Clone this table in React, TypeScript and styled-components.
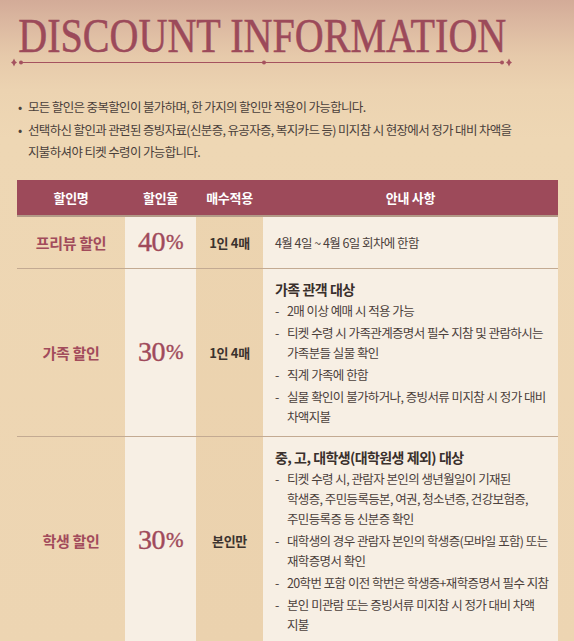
import React from "react";
import styled, { createGlobalStyle } from "styled-components";

const GlobalStyle = createGlobalStyle`
  html, body { margin: 0; padding: 0; }
  body {
    font-family: "Noto Sans CJK KR", "Noto Sans", sans-serif;
    background: #edd5b2;
  }
  * { box-sizing: border-box; }
`;

const COLS = "108px 71px 67px minmax(0, 1fr)";

const Page = styled.div`
  width: 574px;
  min-height: 641px;
  overflow: hidden;
  display: flex;
  flex-direction: column;
  background: linear-gradient(
    180deg,
    #d3ab98 0px,
    #dcb9a1 25px,
    #e6c9aa 55px,
    #ecd3b1 90px,
    #eed7b4 140px,
    #edd5b2 100%
  );
`;

const TitleBlock = styled.header`
  width: 504px;
  margin-left: 10px;
  padding-top: 14px;
  display: flex;
  flex-direction: column;
  align-items: center;
`;

const Title = styled.h1`
  margin: 0;
  font-family: "Liberation Serif", "Times New Roman", serif;
  font-weight: 400;
  font-size: 48px;
  line-height: 44px;
  color: #9c4a5a;
  white-space: nowrap;
  -webkit-text-stroke: 0.5px #9c4a5a;
  transform: scaleX(0.835);
  transform-origin: center;
`;

const Ornament = styled.svg`
  display: block;
  width: 504px;
  height: 9px;
`;

const Notes = styled.ul`
  list-style: none;
  margin: 29px 0 0;
  padding: 0 0 0 18px;
  font-size: 12.5px;
  letter-spacing: -0.65px;
  line-height: 22.5px;
  color: #4a403b;
`;

const Note = styled.li`
  display: flex;
`;

const Bullet = styled.span`
  width: 10px;
  flex: none;
  letter-spacing: 0;
`;

const Lines = styled.span`
  display: flex;
  flex-direction: column;
`;

const Line = styled.span`
  white-space: nowrap;
`;

const Table = styled.div`
  margin: 16px 0 0 17px;
  width: 541px;
  display: flex;
  flex-direction: column;
`;

const HeadRow = styled.div`
  display: grid;
  grid-template-columns: ${COLS};
  height: 37px;
  background: #9d4a5a;
  border-bottom: 2px solid #b29a87;
`;

const HeadCell = styled.div`
  display: flex;
  align-items: center;
  justify-content: center;
  color: #ffffff;
  font-weight: 700;
  font-size: 13px;
  letter-spacing: -0.3px;
`;

const Row = styled.div<{ $min?: number }>`
  display: grid;
  grid-template-columns: ${COLS};
  min-height: ${(p) => (p.$min ? `${p.$min}px` : "auto")};
  border-bottom: 1px solid #c3aa92;
`;

const NameCell = styled.div`
  display: flex;
  align-items: center;
  justify-content: center;
  color: #a24b5b;
  font-weight: 700;
  font-size: 15px;
  letter-spacing: -0.3px;
`;

const RateCell = styled.div`
  display: flex;
  align-items: center;
  justify-content: center;
  background: #f7efe4;
  color: #a04a5b;
  font-family: "Liberation Serif", "Times New Roman", serif;
  font-size: 28px;
  letter-spacing: -0.5px;
  -webkit-text-stroke: 0.4px #a04a5b;
`;

const Pct = styled.span`
  font-size: 21px;
  margin-left: 1px;
`;

const CountCell = styled.div`
  display: flex;
  align-items: center;
  justify-content: center;
  color: #3b322e;
  font-weight: 700;
  font-size: 13px;
  letter-spacing: -0.3px;
  background: rgba(230, 200, 160, 0.2);
`;

const NoticeCell = styled.div`
  display: flex;
  flex-direction: column;
  justify-content: center;
  gap: 2px;
  min-width: 0;
  padding: 10px 12px 9px;
  background: #f7efe4;
  color: #4b403b;
  font-size: 12.5px;
  letter-spacing: -0.65px;
  word-spacing: 0.3px;
  line-height: 20px;
`;

const NoticeTitle = styled.div`
  font-weight: 700;
  font-size: 14px;
  letter-spacing: -0.6px;
  color: #3a302c;
`;

const Item = styled.div`
  display: flex;
`;

const Dash = styled.span`
  width: 12px;
  flex: none;
`;

type Notice = { title?: string; items: string[][]; single?: string };

type RowData = {
  name: string;
  rate: string;
  count: string;
  min?: number;
  notice: Notice;
};

const rows: RowData[] = [
  {
    name: "프리뷰 할인",
    rate: "40",
    count: "1인 4매",
    min: 52,
    notice: { single: "4월 4일 ~ 4월 6일 회차에 한함", items: [] },
  },
  {
    name: "가족 할인",
    rate: "30",
    count: "1인 4매",
    notice: {
      title: "가족 관객 대상",
      items: [
        ["2매 이상 예매 시 적용 가능"],
        ["티켓 수령 시 가족관계증명서 필수 지참 및 관람하시는", "가족분들 실물 확인"],
        ["직계 가족에 한함"],
        ["실물 확인이 불가하거나, 증빙서류 미지참 시 정가 대비", "차액지불"],
      ],
    },
  },
  {
    name: "학생 할인",
    rate: "30",
    count: "본인만",
    notice: {
      title: "중, 고, 대학생(대학원생 제외) 대상",
      items: [
        [
          "티켓 수령 시, 관람자 본인의 생년월일이 기재된",
          "학생증, 주민등록등본, 여권, 청소년증, 건강보험증,",
          "주민등록증 등 신분증 확인",
        ],
        ["대학생의 경우 관람자 본인의 학생증(모바일 포함) 또는", "재학증명서 확인"],
        ["20학번 포함 이전 학번은 학생증+재학증명서 필수 지참"],
        ["본인 미관람 또는 증빙서류 미지참 시 정가 대비 차액", "지불"],
      ],
    },
  },
];

const Star = ({ x }: { x: number }) => (
  <path
    d={`M${x} 0.5 L${x + 1.3} 3.3 L${x + 3} 4.5 L${x + 1.3} 5.7 L${x} 8.5 L${x - 1.3} 5.7 L${x - 3} 4.5 L${x - 1.3} 3.3 Z`}
    fill="#a5525f"
  />
);

export default function App() {
  return (
    <Page>
      <GlobalStyle />
      <TitleBlock>
        <Title>DISCOUNT INFORMATION</Title>
        <Ornament viewBox="0 0 504 9">
          <line x1="10" y1="4.5" x2="493" y2="4.5" stroke="#a5525f" strokeWidth="1.2" />
          <Star x={4} />
          <Star x={499} />
          <circle cx="11" cy="4.5" r="2" fill="#a5525f" />
          <circle cx="254" cy="4.5" r="2" fill="#a5525f" />
          <circle cx="492" cy="4.5" r="2" fill="#a5525f" />
        </Ornament>
      </TitleBlock>

      <Notes>
        <Note>
          <Bullet>•</Bullet>
          <Lines>
            <Line>모든 할인은 중복할인이 불가하며, 한 가지의 할인만 적용이 가능합니다.</Line>
          </Lines>
        </Note>
        <Note>
          <Bullet>•</Bullet>
          <Lines>
            <Line>
              선택하신 할인과 관련된 증빙자료(신분증, 유공자증, 복지카드 등) 미지참 시 현장에서 정가 대비 차액을
            </Line>
            <Line>지불하셔야 티켓 수령이 가능합니다.</Line>
          </Lines>
        </Note>
      </Notes>

      <Table>
        <HeadRow>
          <HeadCell>할인명</HeadCell>
          <HeadCell>할인율</HeadCell>
          <HeadCell>매수적용</HeadCell>
          <HeadCell>안내 사항</HeadCell>
        </HeadRow>
        {rows.map((r) => (
          <Row key={r.name} $min={r.min}>
            <NameCell>{r.name}</NameCell>
            <RateCell>
              {r.rate}
              <Pct>%</Pct>
            </RateCell>
            <CountCell>{r.count}</CountCell>
            <NoticeCell>
              {r.notice.single && <div>{r.notice.single}</div>}
              {r.notice.title && <NoticeTitle>{r.notice.title}</NoticeTitle>}
              {r.notice.items.map((lines, i) => (
                <Item key={i}>
                  <Dash>-</Dash>
                  <Lines>
                    {lines.map((l, j) => (
                      <Line key={j}>{l}</Line>
                    ))}
                  </Lines>
                </Item>
              ))}
            </NoticeCell>
          </Row>
        ))}
      </Table>
    </Page>
  );
}
